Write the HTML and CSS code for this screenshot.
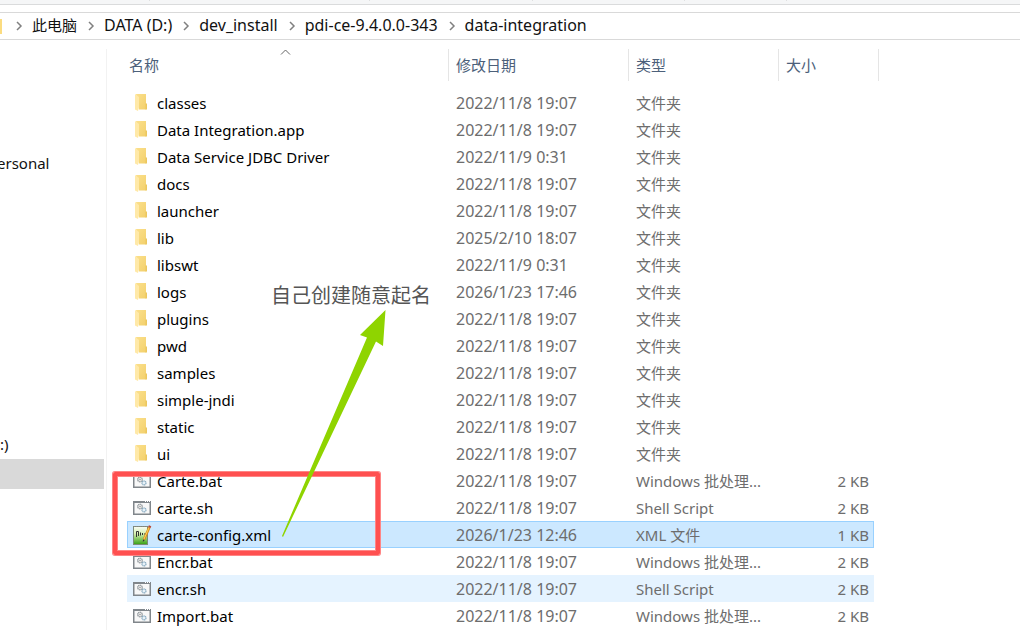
FILE: index.html
```html
<!DOCTYPE html>
<html lang="zh-CN">
<head>
<meta charset="utf-8">
<title>data-integration</title>
<link rel="stylesheet" href="styles.css">
</head>
<body>
<svg class="defs" aria-hidden="true">
  <defs>
    <linearGradient id="gold" x1="0" y1="0" x2="1" y2="1"><stop offset="0" stop-color="#fbe08c"/><stop offset="1" stop-color="#f3d06c"/></linearGradient>
    <linearGradient id="leaf" x1="0" y1="0" x2="0" y2="1"><stop offset="0" stop-color="#fbfdf5"/><stop offset=".4" stop-color="#d5efb0"/><stop offset="1" stop-color="#35a012"/></linearGradient>
    <symbol id="folder" viewBox="0 0 20 22">
      <path d="M3 2h10v15.500H6z" fill="url(#gold)"/>
      <path d="M12.500 11.500h1.500v6h-1.500z" fill="#ecc75f"/>
      <path d="M2 2l4 3v10l-1 4-3-1.500z" fill="#ffe9a8"/>
    </symbol>
    <symbol id="script" viewBox="0 0 20 22">
      <rect x=".75" y="4.750" width="16.500" height="12.500" fill="#f8f8f8" stroke="#80868b" stroke-width="1.500"/>
      <path d="M1 5h16" stroke="#80868b" stroke-width="2"/>
      <path d="M12 4.500h1M14 4.500h1M16 4.500h1" stroke="#fff"/>
      <circle cx="7" cy="9.500" r="2.300" fill="#eee" stroke="#8f969b" stroke-width="1.300" stroke-dasharray="1.200 .4"/>
      <circle cx="7" cy="9.500" r=".8" fill="#999"/>
      <circle cx="11" cy="13" r="2" fill="#e7f1f8" stroke="#83a7bd" stroke-width="1.200" stroke-dasharray="1.200 .4"/>
    </symbol>
    <symbol id="notepad" viewBox="0 0 20 22">
      <rect x=".5" y="2.500" width="14" height="18" fill="url(#leaf)" stroke="#7c8b78"/>
      <path d="M1 2.500h13" stroke="#888" stroke-dasharray="1 1"/>
      <path d="M3.500 13V7.500h2V12M7.500 8.500v3M9.500 9v2M11 10h2" fill="none" stroke="#333"/>
      <path d="M16.500 3L11 15.500" stroke="#d98b1c" stroke-width="2.600"/>
      <path d="M16.300 3L11 15" stroke="#ffd35a"/>
      <path d="M16.300 3.500l.8-1.800" stroke="#b8473b" stroke-width="2.600"/>
      <path d="M9.800 18l.2-2.500 1.700.7z" fill="#333"/>
    </symbol>
    <symbol id="chevron" viewBox="0 0 8 10"><path d="M2 1l4 4-4 4" fill="none" stroke="#808080" stroke-width="1.500"/></symbol>
  </defs>
</svg>

<div class="ribbon"><span class="group-a"></span><span class="group-b"></span><span class="group-c"></span><span class="group-d"></span><span class="group-e"></span></div>
<nav class="address" aria-label="地址栏">
  <span class="address-folder"></span>
  <svg class="chevron"><use href="#chevron"/></svg><a class="han" href="#">此电脑</a>
  <svg class="chevron"><use href="#chevron"/></svg><a href="#">DATA (D:)</a>
  <svg class="chevron"><use href="#chevron"/></svg><a href="#">dev_install</a>
  <svg class="chevron"><use href="#chevron"/></svg><a href="#">pdi-ce-9.4.0.0-343</a>
  <svg class="chevron"><use href="#chevron"/></svg><a href="#">data-integration</a>
</nav>
<main class="explorer">
  <aside class="tree">
    <a class="tree-item first" href="#">ersonal</a>
    <a class="tree-item drive" href="#">:)</a>
    <a class="tree-item current" href="#" aria-label="DATA (D:)"></a>
  </aside>
  <section class="listing">
    <table class="files">
      <colgroup><col class="col-name"><col class="col-date"><col class="col-type"><col class="col-size"></colgroup>
      <thead>
        <tr>
          <th><div class="head">名称<svg class="sort" viewBox="0 0 11 7"><path d="M1 5.500L5.500 1 10 5.500" fill="none" stroke="#666"/></svg></div></th>
          <th><div class="head">修改日期</div></th>
          <th><div class="head">类型</div></th>
          <th><div class="head last">大小</div></th>
        </tr>
      </thead>
      <tbody>
        <tr><td><div class="name"><svg class="icon"><use href="#folder"/></svg>classes</div></td><td>2022/11/8 19:07</td><td>文件夹</td><td></td></tr>
        <tr><td><div class="name"><svg class="icon"><use href="#folder"/></svg>Data Integration.app</div></td><td>2022/11/8 19:07</td><td>文件夹</td><td></td></tr>
        <tr><td><div class="name"><svg class="icon"><use href="#folder"/></svg>Data Service JDBC Driver</div></td><td>2022/11/9 0:31</td><td>文件夹</td><td></td></tr>
        <tr><td><div class="name"><svg class="icon"><use href="#folder"/></svg>docs</div></td><td>2022/11/8 19:07</td><td>文件夹</td><td></td></tr>
        <tr><td><div class="name"><svg class="icon"><use href="#folder"/></svg>launcher</div></td><td>2022/11/8 19:07</td><td>文件夹</td><td></td></tr>
        <tr><td><div class="name"><svg class="icon"><use href="#folder"/></svg>lib</div></td><td>2025/2/10 18:07</td><td>文件夹</td><td></td></tr>
        <tr><td><div class="name"><svg class="icon"><use href="#folder"/></svg>libswt</div></td><td>2022/11/9 0:31</td><td>文件夹</td><td></td></tr>
        <tr><td><div class="name"><svg class="icon"><use href="#folder"/></svg>logs</div></td><td>2026/1/23 17:46</td><td>文件夹</td><td></td></tr>
        <tr><td><div class="name"><svg class="icon"><use href="#folder"/></svg>plugins</div></td><td>2022/11/8 19:07</td><td>文件夹</td><td></td></tr>
        <tr><td><div class="name"><svg class="icon"><use href="#folder"/></svg>pwd</div></td><td>2022/11/8 19:07</td><td>文件夹</td><td></td></tr>
        <tr><td><div class="name"><svg class="icon"><use href="#folder"/></svg>samples</div></td><td>2022/11/8 19:07</td><td>文件夹</td><td></td></tr>
        <tr><td><div class="name"><svg class="icon"><use href="#folder"/></svg>simple-jndi</div></td><td>2022/11/8 19:07</td><td>文件夹</td><td></td></tr>
        <tr><td><div class="name"><svg class="icon"><use href="#folder"/></svg>static</div></td><td>2022/11/8 19:07</td><td>文件夹</td><td></td></tr>
        <tr><td><div class="name"><svg class="icon"><use href="#folder"/></svg>ui</div></td><td>2022/11/8 19:07</td><td>文件夹</td><td></td></tr>
        <tr><td><div class="name"><svg class="icon"><use href="#script"/></svg>Carte.bat</div></td><td>2022/11/8 19:07</td><td>Windows 批处理...</td><td>2 KB</td></tr>
        <tr><td><div class="name"><svg class="icon"><use href="#script"/></svg>carte.sh</div></td><td>2022/11/8 19:07</td><td>Shell Script</td><td>2 KB</td></tr>
        <tr class="selected"><td><div class="name"><svg class="icon"><use href="#notepad"/></svg>carte-config.xml</div></td><td>2026/1/23 12:46</td><td>XML 文件</td><td>1 KB</td></tr>
        <tr><td><div class="name"><svg class="icon"><use href="#script"/></svg>Encr.bat</div></td><td>2022/11/8 19:07</td><td>Windows 批处理...</td><td>2 KB</td></tr>
        <tr class="hovered"><td><div class="name"><svg class="icon"><use href="#script"/></svg>encr.sh</div></td><td>2022/11/8 19:07</td><td>Shell Script</td><td>2 KB</td></tr>
        <tr><td><div class="name"><svg class="icon"><use href="#script"/></svg>Import.bat</div></td><td>2022/11/8 19:07</td><td>Windows 批处理...</td><td>2 KB</td></tr>
      </tbody>
    </table>
  </section>
</main>
<div class="mark-box"></div>
<svg class="mark-arrow" viewBox="0 0 106 228"><path d="M0 226L85 27.500 78 25 103.500 0 101 36 94 31.500 1 227z" fill="#8fd400"/></svg>
<div class="mark-note">自己创建随意起名</div>
</body>
</html>
```
FILE: styles.css
```css
* { box-sizing: border-box; }
body {
  margin: 0;
  height: 100vh;
  overflow: hidden;
  position: relative;
  display: flex;
  flex-direction: column;
  background: #fff;
  color: #111;
  font: 15px/20px "Noto Sans", "Noto Sans CJK SC", sans-serif;
}
a { color: inherit; text-decoration: none; }
.defs { position: absolute; width: 0; height: 0; }
.ribbon {
  flex: none;
  display: flex;
  height: 5px;
  background: #f5f6f7;
  border-bottom: 1px solid #dadbdc;
}
.ribbon span { height: 1px; border-right: 1px solid #dfe0e1; }
.group-a { width: 150px; }
.group-b { width: 220px; }
.group-c { width: 163px; }
.group-d { width: 152px; }
.group-e { width: 102px; }
.address {
  flex: none;
  display: flex;
  align-items: center;
  height: 28px;
  margin-top: 7px;
  border: solid #d9d9d9;
  border-width: 1px 0;
  white-space: nowrap;
  font-size: 16px;
}
.address-folder { width: 2px; height: 15px; margin-right: 13px; background: #fbdc80; }
.chevron { width: 8px; height: 10px; margin-right: 9px; }
.address a { margin-right: 10px; padding-bottom: 2px; }
.address .han { font-size: 15px; }
.explorer { flex: 1; min-height: 0; display: flex; padding-top: 9px; }
.tree {
  flex: none;
  width: 107px;
  padding-top: 99px;
  border-right: 1px solid #f2f2f2;
}
.tree-item { display: block; width: 104px; height: 30px; line-height: 30px; overflow: hidden; }
.first { text-indent: -3px; }
.drive { margin-top: 251px; }
.current { background: #d9d9d9; }
.listing { flex: 1; padding-left: 20px; }
.files { width: 747px; table-layout: fixed; border-collapse: collapse; }
.col-name { width: 322px; }
.col-date { width: 180px; }
.col-type { width: 150px; }
.files th { height: 40px; padding: 0; vertical-align: top; font-weight: 400; text-align: left; color: #4c607a; }
.head { position: relative; height: 32px; padding-left: 7px; line-height: 32px; border-right: 1px solid #e5e5e5; }
th:first-child .head { padding-left: 2px; }
.last { margin-right: -5px; }
.sort { position: absolute; left: 153px; top: 0; width: 11px; height: 7px; }
.files td { height: 27px; padding: 0 0 0 7px; color: #6d6d6d; white-space: nowrap; }
.files td:first-child { padding-left: 6px; color: #000; }
.files td:nth-child(2) { font-size: 16px; }
.files td:last-child { padding-right: 5px; text-align: right; }
.name { display: flex; align-items: center; gap: 4px; }
.icon { flex: none; width: 20px; height: 22px; }
.selected { background: #cce8ff; outline: 1px solid #99d1ff; outline-offset: -1px; }
.hovered { background: #e5f3ff; }
.mark-box {
  position: absolute;
  left: 113px;
  top: 472px;
  width: 267px;
  height: 83px;
  border: 4px solid #ff5050;
  border-radius: 2px;
  box-shadow: 0 0 0 1px #ff8585, inset 0 0 0 1px #ff8585;
}
.mark-arrow { position: absolute; left: 282px; top: 310px; width: 106px; height: 228px; }
.mark-note { position: absolute; left: 271px; top: 282px; font-size: 20px; line-height: 28px; color: #555; }
```
